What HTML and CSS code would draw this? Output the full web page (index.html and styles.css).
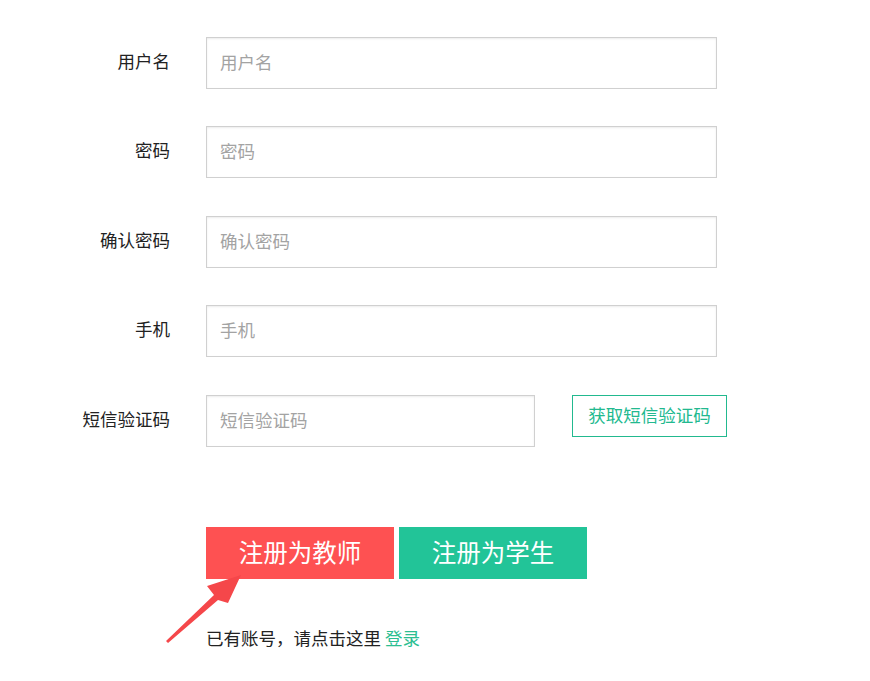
FILE: index.html
```html
<!DOCTYPE html>
<html lang="zh">
<head>
<meta charset="utf-8">
<link rel="stylesheet" href="styles.css">
</head>
<body>
<div class="page">
  <form class="form">
    <div class="row">
      <label class="label">用户名</label>
      <input class="input" type="text" placeholder="用户名">
    </div>
    <div class="row">
      <label class="label">密码</label>
      <input class="input" type="password" placeholder="密码">
    </div>
    <div class="row">
      <label class="label">确认密码</label>
      <input class="input" type="password" placeholder="确认密码">
    </div>
    <div class="row">
      <label class="label">手机</label>
      <input class="input" type="text" placeholder="手机">
    </div>
    <div class="row">
      <label class="label">短信验证码</label>
      <input class="input input-short" type="text" placeholder="短信验证码">
      <button class="sms-btn" type="button">获取短信验证码</button>
    </div>
    <div class="actions">
      <button class="btn btn-teacher" type="button">注册为教师</button>
      <button class="btn btn-student" type="button">注册为学生</button>
    </div>
    <p class="login-tip">已有账号，请点击这里 <a class="login-link" href="#">登录</a></p>
  </form>
  <svg class="arrow" width="90" height="80" viewBox="0 0 90 80">
    <polygon fill="#f5474a" points="0,67 48,21 41,12 75,1 62,29 52,26 2,69"/>
  </svg>
</div>
</body>
</html>
```
FILE: styles.css
```css
html, body {
  margin: 0;
  padding: 0;
  background: #fff;
}
body {
  font-family: "Microsoft YaHei", "Noto Sans CJK SC", "Liberation Sans", sans-serif;
  color: #333;
}
.page {
  position: relative;
  width: 870px;
  height: 681px;
}
.form {
  padding-top: 37px;
  display: flex;
  flex-direction: column;
}
.row {
  display: flex;
  align-items: flex-start;
  height: 52px;
  margin-bottom: 37.4px;
}
.label {
  width: 170px;
  text-align: right;
  font-size: 17.5px;
  line-height: 52px;
  height: 52px;
  color: #222;
  margin-right: 36px;
  margin-top: -2px;
}
.input {
  box-sizing: border-box;
  width: 511px;
  height: 52px;
  border: 1px solid #d0d0d0;
  box-shadow: inset 0 1px 2px rgba(0,0,0,0.08);
  padding: 0 13px 3px 13px;
  font-family: inherit;
  font-size: 17.5px;
  color: #333;
  outline: none;
  margin: 0;
}
.input::placeholder {
  color: #a3a3a3;
}
.input-short {
  width: 329px;
}
.sms-btn {
  box-sizing: border-box;
  margin: 0 0 0 37px;
  width: 155px;
  height: 42px;
  border: 1px solid #22b98f;
  background: #fff;
  color: #22b98f;
  font-family: inherit;
  font-size: 17.5px;
  padding: 0;
  padding-bottom: 2px;
}
.actions {
  display: flex;
  gap: 5px;
  margin-left: 206px;
  margin-top: 43px;
}
.btn {
  width: 188px;
  height: 52px;
  border: none;
  color: #fff;
  font-family: inherit;
  font-size: 24.5px;
  padding: 0 0 2px 0;
  margin: 0;
}
.btn-teacher {
  background: #fe5152;
}
.btn-student {
  background: #22c498;
}
.login-tip {
  margin: 47px 0 0 206px;
  font-size: 17.5px;
  line-height: 24px;
  color: #222;
}
.login-link {
  color: #2cbe91;
  text-decoration: none;
}
.arrow {
  position: absolute;
  left: 166px;
  top: 574px;
}
```
